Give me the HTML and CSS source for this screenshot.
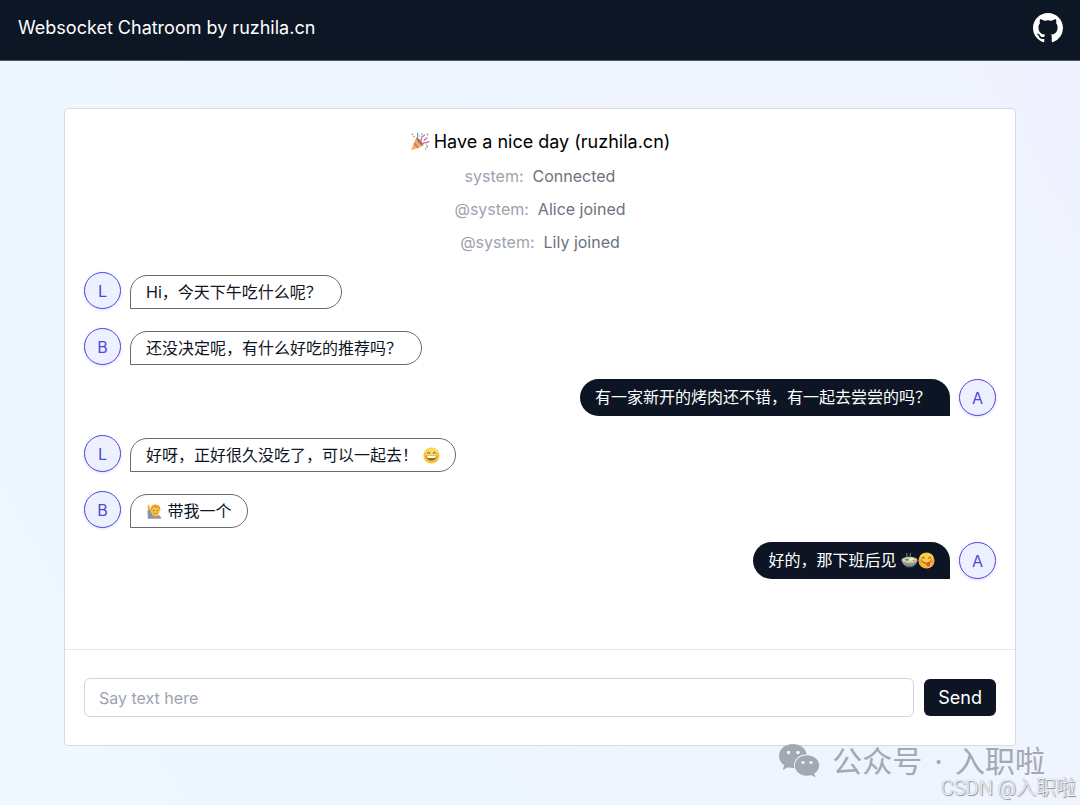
FILE: index.html
```html
<!DOCTYPE html>
<html lang="zh-CN">
<head>
  <meta charset="UTF-8">
  <meta name="viewport" content="width=device-width, initial-scale=1.0">
  <title>Websocket Chatroom</title>
  <link rel="stylesheet" href="styles.css">
</head>
<body>
  <header class="topbar">
    <h1>Websocket Chatroom by ruzhila.cn</h1>
    <a href="#" class="github" aria-label="GitHub">
      <svg viewBox="0 0 16 16" fill="currentColor"><path d="M8 0C3.58 0 0 3.58 0 8c0 3.54 2.29 6.53 5.47 7.59.4.07.55-.17.55-.38 0-.19-.01-.82-.01-1.49-2.01.37-2.53-.49-2.69-.94-.09-.23-.48-.94-.82-1.13-.28-.15-.68-.52-.01-.53.63-.01 1.08.58 1.23.82.72 1.21 1.87.87 2.33.66.07-.52.28-.87.51-1.07-1.78-.2-3.64-.89-3.64-3.95 0-.87.31-1.59.82-2.15-.08-.2-.36-1.02.08-2.12 0 0 .67-.21 2.2.82.64-.18 1.32-.27 2-.27s1.36.09 2 .27c1.53-1.04 2.2-.82 2.2-.82.44 1.1.16 1.92.08 2.12.51.56.82 1.27.82 2.15 0 3.07-1.87 3.75-3.65 3.95.29.25.54.73.54 1.48 0 1.07-.01 1.93-.01 2.2 0 .21.15.46.55.38A8.01 8.01 0 0 0 16 8c0-4.42-3.58-8-8-8z"/></svg>
    </a>
  </header>

  <main class="chat">
    <section class="messages">
      <h2>
        <svg class="party" viewBox="0 0 20 20" role="img" aria-label="party">
          <path d="M1 18.6 6.2 5.8c3 1 6.200 4.500 7 8z" fill="#f2b544"/>
          <path d="m3.600 12.200 3.600 4.200 1.900-.8-4.600-5.600z" fill="#d9758a"/>
          <path d="M6.200 5.800c1.500-1.200 7.900 5.100 7 8-2.900-.5-6.600-4.300-7-8z" fill="#a8688c"/>
          <path d="M10.500 9c1.500-1 .2-3 1.600-4.200 1-.9 2-.3 2.300-1.900M13 11.500c1.500-1.800 3-.2 4.100-1.200.7-.6 1-.8 1.800-.5" fill="none" stroke="#e4657b" stroke-width="1.300" stroke-linecap="round"/>
          <path d="M7.500 5.400c.8-1.700-.6-2.500.3-4M14.200 8.200l2.600-2.500" fill="none" stroke="#48a5d8" stroke-width="1.300" stroke-linecap="round"/>
          <g fill="#4b91d1"><circle cx="2.500" cy="2.200" r=".8"/><circle cx="17.200" cy="14.500" r=".9"/><circle cx="11.800" cy="2" r=".7"/></g>
          <g fill="#e76a79"><circle cx="4" cy="4.500" r=".8"/><circle cx="17.500" cy="2.500" r=".9"/><circle cx="15.500" cy="16.800" r=".7"/></g>
          <g fill="#efbd43"><circle cx="10" cy="4" r=".7"/><circle cx="16.500" cy="12.300" r=".7"/></g>
        </svg>
        Have a nice day (ruzhila.cn)
      </h2>
      <p class="system"><span>system:</span>Connected</p>
      <p class="system"><span>@system:</span>Alice joined</p>
      <p class="system"><span>@system:</span>Lily joined</p>

      <div class="row">
        <div class="avatar">L</div>
        <div class="bubble">Hi，今天下午吃什么呢？</div>
      </div>
      <div class="row">
        <div class="avatar">B</div>
        <div class="bubble">还没决定呢，有什么好吃的推荐吗？</div>
      </div>
      <div class="row mine">
        <div class="bubble">有一家新开的烤肉还不错，有一起去尝尝的吗？</div>
        <div class="avatar">A</div>
      </div>
      <div class="row">
        <div class="avatar">L</div>
        <div class="bubble with-emoji">好呀，正好很久没吃了，可以一起去！ <svg class="emoji" viewBox="0 0 18 18" role="img" aria-label="smile">
            <circle cx="9" cy="9" r="8.500" fill="#f9c338"/>
            <ellipse cx="9" cy="5.800" rx="6.500" ry="4.600" fill="#fdda62"/>
            <path d="M4.700 6.700c.5-1.700 1.900-1.700 2.400 0M10.900 6.700c.5-1.700 1.900-1.700 2.400 0" fill="none" stroke="#6b461c" stroke-width="1" stroke-linecap="round"/>
            <path d="M3.500 9.300h11c0 3-2 5.200-5.500 5.200s-5.500-2.200-5.500-5.200z" fill="#9b6a32"/>
            <path d="M4.300 9.500h9.400c0 1.300-.6 2.100-1.200 2.100h-7c-.7 0-1.200-.8-1.200-2.100z" fill="#fff"/>
          </svg></div>
      </div>
      <div class="row">
        <div class="avatar">B</div>
        <div class="bubble with-emoji"><svg class="emoji" viewBox="0 0 18 18" role="img" aria-label="raising hand">
            <path d="M2.700 1.600c.6-.4 1 .1 1.100.8l.5 3.300 1 2.800-2.300.8C1.900 7.500 1.400 5 1.700 3.600z" fill="#f4b93f"/>
            <path d="m1.500 8 3.200-.8 2.500 5.600 7.400.4 1.900 3.600H2z" fill="#8e969e"/>
            <path d="M7.700 11h4.500v3.200l-2.100 1-2.400-1.100z" fill="#dfa234"/>
            <ellipse cx="10" cy="8" rx="4.700" ry="5.500" fill="#fac648"/>
            <path d="M4.900 8.500C4.300 4 6.500 1.500 10.200 1.700c4 .2 5.600 2.800 4.800 6.900-.9-.8-1.200-2-1.300-3-2.500.2-4.700-.4-6-1.400-.3 2-1.300 3.400-2.800 4.300z" fill="#e5a235"/>
            <g fill="#65441d"><circle cx="8.300" cy="8" r=".7"/><circle cx="12" cy="8" r=".7"/></g>
            <path d="M8.400 10.700c1.100 1 2.300 1 3.400 0" fill="none" stroke="#b35431" stroke-width=".9" stroke-linecap="round"/>
          </svg> 带我一个</div>
      </div>
      <div class="row mine">
        <div class="bubble with-emoji">好的，那下班后见 <svg class="emoji" viewBox="0 0 18 18" role="img" aria-label="hot pot">
            <path d="M6.500 5.200C5 3.600 7.500 3 6 1.400M10 4.500c-1.300-1.300.9-1.700 0-3" fill="none" stroke="#9fa6a6" stroke-width=".9" stroke-linecap="round"/>
            <path d="M.5 8.500c.8 4.600 3.800 7.300 8.500 7.300s7.700-2.700 8.500-7.300z" fill="#8b9693"/>
            <path d="M4.700 13.900c2.700 1 5.900 1 8.600 0l-1.300 2.200H6z" fill="#596d69"/>
            <ellipse cx="9" cy="8.500" rx="8.500" ry="3.500" fill="#b4bcb6"/>
            <ellipse cx="9" cy="8.300" rx="6.900" ry="2.600" fill="#e3d3a0"/>
            <path d="m3.800 8.300 2.700-1.500 2 1.200-1.800 1.700z" fill="#609454"/>
            <ellipse cx="10.800" cy="7.600" rx="2.200" ry="1.100" fill="#f9efd0"/>
            <path d="m12.100 9 1.900-.9 1 .6-1.500 1.100z" fill="#cd7940"/>
          </svg><svg class="emoji" viewBox="0 0 18 18" role="img" aria-label="yum">
            <circle cx="9" cy="9" r="8.500" fill="#f8b932"/>
            <ellipse cx="9" cy="6.300" rx="7" ry="5" fill="#fdd14a"/>
            <g fill="#ed863c" opacity=".6"><circle cx="3.500" cy="9.500" r="2"/><circle cx="14.500" cy="9.500" r="2"/></g>
            <path d="M4.300 6.600c.5-1.700 2.100-1.700 2.600 0M11.100 6.600c.5-1.700 2.100-1.700 2.600 0M4.700 10.200c2 2.200 6.600 2.300 8.600 0" fill="none" stroke="#743e18" stroke-width="1" stroke-linecap="round"/>
            <path d="M8.300 12.200c1.100-.2 2.200-.6 3-1.100 2 .6 2.200 4 .1 4.200-1.700.1-2.700-1.300-3.100-3.100z" fill="#e64c63"/>
          </svg></div>
        <div class="avatar">A</div>
      </div>
    </section>

    <form class="composer">
      <input type="text" placeholder="Say text here" aria-label="Say text here">
      <button type="button">Send</button>
    </form>
  </main>

  <div class="watermark">
    <svg viewBox="0 0 42 36" aria-hidden="true">
      <path d="M15 1C7 1 1 6.300 1 13c0 3.800 2 7 5.200 9.300L4.800 27l5.300-2.700c1.900.6 3.900.8 6.200.6C14.500 18 20 11.300 28.800 11.200 27.400 5.200 22 1 15 1z"/>
      <path d="M29 12.300c-6.800 0-12.200 4.500-12.200 10.200 0 5.600 5.400 10.200 12.200 10.200 1.500 0 3-.2 4.300-.7l4.100 2.500-1.100-3.900c3-1.900 4.900-4.800 4.900-8.100 0-5.700-5.400-10.200-12.200-10.200z"/>
      <g fill="#eff5ff"><circle cx="10.500" cy="9.500" r="1.800"/><circle cx="20" cy="9.500" r="1.800"/><circle cx="25" cy="19.500" r="1.600"/><circle cx="33" cy="19.500" r="1.600"/></g>
    </svg>
    <span>公众号</span>
    <span>·</span>
    <span>入职啦</span>
  </div>
  <div class="credit">CSDN @入职啦</div>
</body>
</html>
```
FILE: styles.css
```css
* {
  box-sizing: border-box;
}
body {
  margin: 0;
  min-height: 100vh;
  display: flex;
  flex-direction: column;
  font-family: Inter, "Noto Sans CJK SC", sans-serif;
  font-size: 16px;
  background: linear-gradient(60deg, #eef8ff 0%, #eef5ff 45%, #f0f3ff 100%);
  color: #0d1524;
}
h1, h2, p {
  margin: 0;
}
.topbar {
  display: flex;
  align-items: center;
  justify-content: space-between;
  height: 61px;
  padding: 0 17px 5px 18px;
  background: #0d1625;
  border-bottom: 1px solid #4b5563;
  color: #fff;
}
.topbar h1 {
  font-size: 18px;
  font-weight: 400;
}
.github {
  display: flex;
  color: #fff;
}
.github svg {
  width: 30px;
  height: 30px;
}
.chat {
  flex: 1;
  display: flex;
  flex-direction: column;
  margin: 47px 64px 59px;
  background: #fff;
  border: 1px solid #d9dbe1;
  border-radius: 4px;
}
.messages {
  flex: 1;
  padding: 19px;
}
.messages h2 {
  display: flex;
  align-items: center;
  justify-content: center;
  gap: 4px;
  line-height: 27px;
  font-size: 18px;
  font-weight: 400;
  color: #000;
}
.party {
  width: 20px;
  height: 20px;
}
.system {
  margin-top: 9px;
  line-height: 24px;
  text-align: center;
  color: #6b7280;
}
.system span {
  margin-right: 9px;
  color: #9ca3af;
}
.row {
  display: flex;
  align-items: flex-end;
  gap: 9px;
  margin-top: 19px;
}
.system + .row {
  margin-top: 18px;
}
.row.mine {
  justify-content: flex-end;
  margin-top: 14px;
}
.avatar {
  display: flex;
  align-items: center;
  justify-content: center;
  width: 37px;
  height: 37px;
  border: 1px solid #4f46e5;
  border-radius: 50%;
  background: #edf1ff;
  box-shadow: 0 1px 3px rgba(79, 70, 229, 0.2);
  color: #5147d8;
}
.bubble {
  height: 34px;
  padding: 0 19px 0 15px;
  border: 1px solid #6b6b6b;
  border-radius: 17px 17px 17px 0;
  line-height: 32px;
  white-space: nowrap;
}
.bubble.with-emoji {
  padding-right: 15px;
}
.mine .bubble {
  height: 37px;
  border: 0;
  border-radius: 19px 19px 0 19px;
  line-height: 37px;
  background: #0d1524;
  color: #fff;
}
.emoji {
  width: 17px;
  height: 17px;
  vertical-align: -3px;
}
.composer {
  display: flex;
  align-items: center;
  gap: 10px;
  padding: 28px 19px;
  border-top: 1px solid #e5e7eb;
}
.composer input {
  flex: 1;
  min-width: 0;
  height: 39px;
  padding: 0 14px;
  border: 1px solid #d1d5db;
  border-radius: 6px;
  background: #fff;
  font: inherit;
}
.composer input::placeholder {
  color: #9ca3af;
}
.composer button {
  height: 37px;
  padding: 0 14px;
  border: 0;
  border-radius: 6px;
  background: #0d1524;
  color: #fff;
  font: inherit;
  font-size: 18px;
  cursor: pointer;
}
/* watermarks over the page corner */
.watermark {
  position: absolute;
  right: 35px;
  bottom: 26px;
  display: flex;
  align-items: center;
  gap: 12px;
  line-height: 28px;
  font-family: Inter, "Noto Sans CJK SC", sans-serif;
  font-size: 30px;
  font-weight: 400;
  color: #a3a8b1;
}
.watermark svg {
  width: 42px;
  height: 36px;
  fill: #a3a8b1;
}
.credit {
  position: absolute;
  right: 4px;
  bottom: 5px;
  line-height: 24px;
  font-family: Roboto, "Noto Sans CJK SC", sans-serif;
  font-size: 20px;
  font-weight: 300;
  color: #f4f6fa;
  text-shadow: 1px 1px 1px #858a94, 0 0 1px #858a94;
}
```
